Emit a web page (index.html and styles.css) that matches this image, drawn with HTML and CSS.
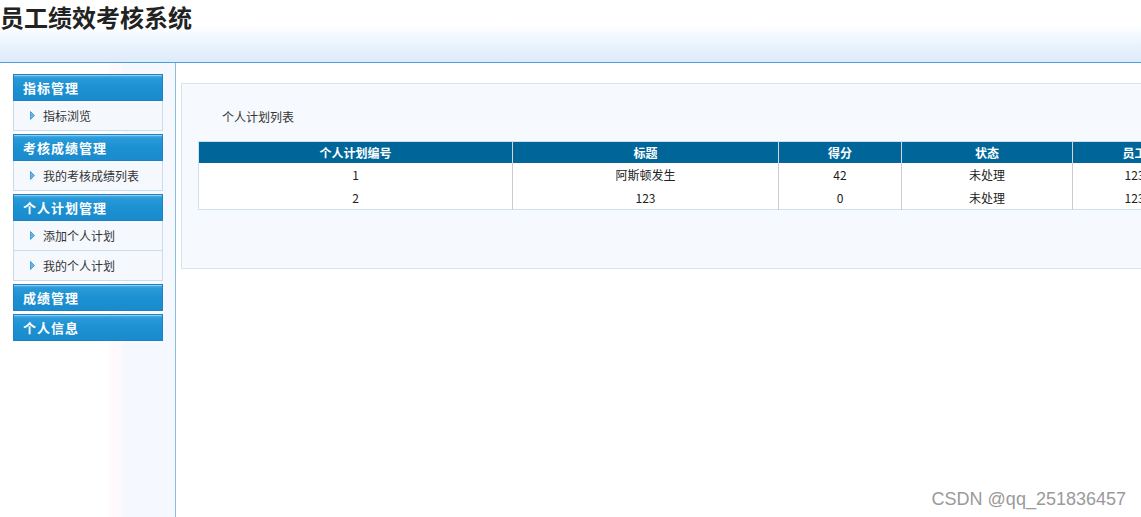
FILE: index.html
```html
<!DOCTYPE html>
<html lang="zh-CN">
<head>
<meta charset="utf-8">
<title>员工绩效考核系统</title>
<link rel="stylesheet" href="styles.css">
</head>
<body>
<header class="top">
  <h1 class="title">员工绩效考核系统</h1>
</header>
<div class="layout">
  <aside class="side">
    <div class="menu">
      <div class="menu-head">指标管理</div>
      <ul class="menu-list">
        <li class="menu-item"><svg class="arrow" viewBox="0 0 5 9" width="5" height="9"><polygon points="0.5,0.5 4.5,4.5 0.5,8.5" /></svg>指标浏览</li>
      </ul>
    </div>
    <div class="menu">
      <div class="menu-head">考核成绩管理</div>
      <ul class="menu-list">
        <li class="menu-item"><svg class="arrow" viewBox="0 0 5 9" width="5" height="9"><polygon points="0.5,0.5 4.5,4.5 0.5,8.5" /></svg>我的考核成绩列表</li>
      </ul>
    </div>
    <div class="menu">
      <div class="menu-head">个人计划管理</div>
      <ul class="menu-list">
        <li class="menu-item"><svg class="arrow" viewBox="0 0 5 9" width="5" height="9"><polygon points="0.5,0.5 4.5,4.5 0.5,8.5" /></svg>添加个人计划</li>
        <li class="menu-item"><svg class="arrow" viewBox="0 0 5 9" width="5" height="9"><polygon points="0.5,0.5 4.5,4.5 0.5,8.5" /></svg>我的个人计划</li>
      </ul>
    </div>
    <div class="menu">
      <div class="menu-head">成绩管理</div>
    </div>
    <div class="menu">
      <div class="menu-head">个人信息</div>
    </div>
  </aside>
  <main class="main">
    <section class="panel">
      <div class="caption">个人计划列表</div>
      <table class="grid">
        <colgroup>
          <col class="c1"><col class="c2"><col class="c3"><col class="c4"><col class="c5"><col class="c6">
        </colgroup>
        <thead>
          <tr><th>个人计划编号</th><th>标题</th><th>得分</th><th>状态</th><th>员工</th><th>操作</th></tr>
        </thead>
        <tbody>
          <tr><td>1</td><td>阿斯顿发生</td><td>42</td><td>未处理</td><td>123</td><td>查看</td></tr>
          <tr><td>2</td><td>123</td><td>0</td><td>未处理</td><td>123</td><td>查看</td></tr>
        </tbody>
      </table>
    </section>
  </main>
</div>
<div class="watermark">CSDN @qq_251836457</div>
</body>
</html>
```
FILE: styles.css
```css
html, body {
  margin: 0;
  padding: 0;
  height: 100%;
  overflow: hidden;
  background: #ffffff;
  font-family: "Noto Sans CJK SC", "Noto Sans", sans-serif;
  font-size: 12px;
  color: #333;
}

.top {
  height: 62px;
  border-bottom: 1px solid #4d9fdb;
  background: linear-gradient(to bottom, #ffffff 0px, #ffffff 26px, #f2f8fe 36px, #dcebfa 62px);
}

.title {
  margin: 0;
  padding-top: 2px;
  font-size: 24px;
  line-height: 30px;
  font-weight: 700;
  color: #222;
}

.layout {
  display: flex;
  height: calc(100% - 63px);
}

.side {
  flex: none;
  border-right: 1px solid #8cbbdc;
  padding: 11px 0 0 13px;
  box-sizing: border-box;
  width: 176px;
  display: flex;
  flex-direction: column;
  gap: 3px;
  background: linear-gradient(to right, #ffffff 0px, #ffffff 108px, #fff8fc 112px, #fffafd 120px, #f5f9ff 124px, #f5f9ff 175px);
}

.menu {
  width: 150px;
}

.menu-head {
  height: 25px;
  line-height: 26px;
  padding-left: 9px;
  border: 1px solid #1f80c4;
  background: linear-gradient(to bottom, #5ab6ea 0px, #2a9ad8 3px, #1c91d2 50%, #1a8bcd 100%);
  box-shadow: inset 0 1px 0 rgba(255,255,255,0.35);
  color: #fff;
  font-weight: 700;
  font-size: 13px;
  letter-spacing: 1px;
}

.menu-list {
  list-style: none;
  margin: 0;
  padding: 0;
  border: 1px solid #c9dcea;
  border-top: none;
  background: #f5f9fe;
}

.menu-item {
  display: flex;
  align-items: center;
  height: 29px;
  padding-left: 16px;
  color: #333;
  font-size: 12px;
}

.menu-item + .menu-item {
  border-top: 1px solid #c9dcea;
}

.arrow {
  margin-right: 8px;
}

.arrow polygon {
  fill: #6ab6e8;
  stroke: #2b8fd4;
  stroke-width: 0.8;
}

.main {
  flex: 1;
  min-width: 0;
  overflow: hidden;
  padding: 20px 0 0 5px;
}

.panel {
  width: 1200px;
  border: 1px solid #d8e5f1;
  background: #f6f9fe;
  padding: 24px 0 58px 16px;
}

.caption {
  padding-left: 24px;
  line-height: 18px;
  height: 18px;
  color: #333;
}

.grid {
  margin-top: 15px;
  border-collapse: collapse;
  table-layout: fixed;
  width: 1122px;
  border: 1px solid #cfe0ee;
  background: #fff;
}

.c1 { width: 314px; }
.c2 { width: 266px; }
.c3 { width: 123px; }
.c4 { width: 171px; }
.c5 { width: 124px; }
.c6 { width: 124px; }

.grid th {
  background: #006699;
  color: #fff;
  font-weight: 700;
  height: 21px;
  padding: 0;
  border-left: 1px solid #d6d6d6;
  font-size: 12px;
}

.grid th:first-child,
.grid td:first-child {
  border-left: none;
}

.grid td {
  height: 23px;
  line-height: 20px;
  padding: 0;
  text-align: center;
  border-left: 1px solid #cccccc;
  color: #222;
  font-size: 12px;
}

.watermark {
  position: absolute;
  right: 15px;
  bottom: 7px;
  font-family: "Liberation Sans", Arial, sans-serif;
  font-size: 18px;
  color: #9a9a9a;
}
```
